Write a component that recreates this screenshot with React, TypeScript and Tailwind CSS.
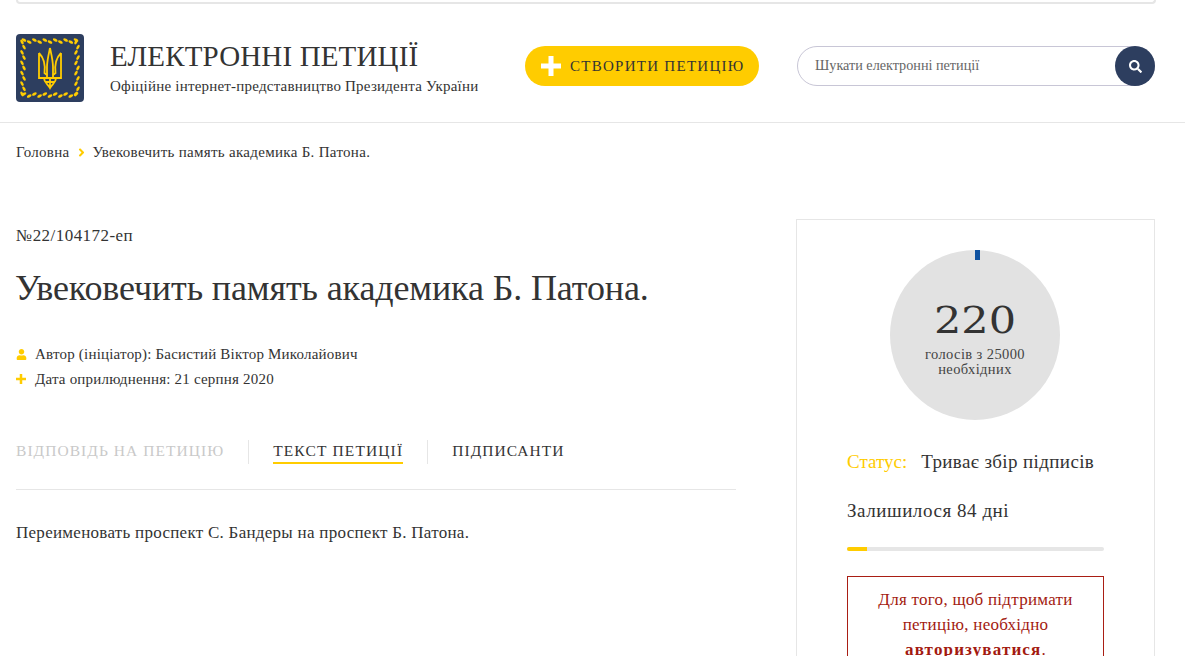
import { FaSearch, FaUser, FaAngleRight } from "react-icons/fa";

// leaves of the wreath, walking clockwise round the square
const leaves: { x: number; y: number; r: number }[] = [];
for (let i = 0; i < 11; i++) {
  const p = 8 + i * 5.2;
  const off = i % 2 === 0 ? -1 : 1;
  leaves.push({ x: p, y: 7 + off, r: 30 });
  leaves.push({ x: 61 + off, y: p, r: 120 });
  leaves.push({ x: p, y: 61 + off, r: -30 });
  leaves.push({ x: 7 + off, y: p, r: 60 });
}

function Logo() {
  return (
    <div className="w-[68px] h-[68px] shrink-0 rounded-[4px] bg-[#2d3e5f]">
      <svg width="68" height="68" viewBox="0 0 68 68" fill="none">
        {leaves.map((l, i) => (
          <ellipse
            key={i}
            cx={l.x}
            cy={l.y}
            rx="2.6"
            ry="1.3"
            fill="#ffcc00"
            transform={`rotate(${l.r} ${l.x} ${l.y})`}
          />
        ))}
        <g stroke="#ffcc00" strokeWidth="1.8">
          <path d="M34 14 C32.5 21 31 27 31 33 L31 44 M34 14 C35.5 21 37 27 37 33 L37 44" />
          <path d="M23 19 V44 H45 V19 M23 19 C28 24 29.5 31 28.5 39 L31 41 M45 19 C40 24 38.5 31 39.5 39 L37 41" />
          <path d="M28 44 C28 49 32 50 34 54 C36 50 40 49 40 44 M34 44 V53 M29.5 48 H38.5" />
        </g>
      </svg>
    </div>
  );
}

function Cross({ size, color }: { size: number; color: string }) {
  return (
    <svg width={size} height={size} viewBox="0 0 20 20" fill={color} className="shrink-0">
      <path d="M7.5 0h5v7.5H20v5h-7.5V20h-5v-7.5H0v-5h7.5z" />
    </svg>
  );
}

function Tab({ label, active, muted, spacing }: { label: string; active?: boolean; muted?: boolean; spacing: string }) {
  return (
    <span
      className={`h-[24px] text-[15.5px] leading-[22px] whitespace-nowrap ${spacing} ${
        muted ? "text-[#c9c9c9]" : "text-[#333]"
      } ${active ? "border-b-2 border-[#ffcc00]" : ""}`}
    >
      {label}
    </span>
  );
}

export default function App() {
  return (
    <div className="h-[656px] overflow-hidden bg-white font-['Liberation_Serif',serif] text-[#333]">
      <div className="mx-4 w-[1140px] h-[4px] border-x-2 border-b-2 border-[#e6e6e6] rounded-b-[6px]" />

      <header className="h-[119px] border-b border-[#e6e6e6] px-4 flex items-start">
        <div className="mt-[30px]">
          <Logo />
        </div>
        <div className="ml-[26px] mt-[34px] w-[415px]">
          <div className="text-[29px] leading-[36px] tracking-[0.15px] whitespace-nowrap">ЕЛЕКТРОННІ ПЕТИЦІЇ</div>
          <div className="text-[15px] leading-[18px] mt-[3px] tracking-[0.21px] whitespace-nowrap">
            Офіційне інтернет-представництво Президента України
          </div>
        </div>
        <button className="mt-[42px] w-[234px] h-[40px] rounded-full bg-[#ffcc00] flex items-center pl-[16px]">
          <Cross size={20} color="#ffffff" />
          <span className="ml-[9px] text-[15px] tracking-[1.27px] whitespace-nowrap">СТВОРИТИ ПЕТИЦІЮ</span>
        </button>
        <div className="ml-[38px] mt-[42px] w-[358px] h-[40px] rounded-full border border-[#c8c6d6] flex items-center justify-between">
          <span className="ml-[17px] text-[14.2px] text-[#666]">Шукати електронні петиції</span>
          <span className="w-[40px] h-[40px] -mr-px rounded-full bg-[#2d3e5f] flex items-center justify-center">
            <FaSearch className="text-white text-[13px]" />
          </span>
        </div>
      </header>

      <nav className="px-4 mt-[20px] flex items-center text-[15px] leading-[18px] tracking-[0.3px]">
        <span>Головна</span>
        <FaAngleRight className="mx-[5px] text-[#ffcc00] text-[13px]" />
        <span>Увековечить память академика Б. Патона.</span>
      </nav>

      <main className="px-4 mt-[58px] flex items-start">
        <section className="w-[720px] shrink-0">
          <div className="mt-[8px] text-[17px] leading-[18px] tracking-[0.45px]">№22/104172-еп</div>
          <h1 className="mt-[21px] -ml-px text-[36px] leading-[44px] tracking-[-0.12px] whitespace-nowrap">
            Увековечить память академика Б. Патона.
          </h1>
          <div className="mt-[35px] flex items-center text-[15px] leading-[18px] tracking-[0.2px]">
            <FaUser className="text-[#ffcc00] text-[11px] w-[11px] mr-[8px]" />
            Автор (ініціатор): Басистий Віктор Миколайович
          </div>
          <div className="mt-[7px] flex items-center text-[15px] leading-[18px] tracking-[0.2px]">
            <span className="mr-[9px]">
              <Cross size={10} color="#ffcc00" />
            </span>
            Дата оприлюднення: 21 серпня 2020
          </div>
          <div className="mt-[52px] pb-[25px] border-b border-[#e6e6e6] flex items-start">
            <Tab label="ВІДПОВІДЬ НА ПЕТИЦІЮ" muted spacing="tracking-[1.05px]" />
            <span className="mx-[24px] w-px h-[24px] bg-[#e6e6e6]" />
            <Tab label="ТЕКСТ ПЕТИЦІЇ" active spacing="tracking-[1.12px]" />
            <span className="mx-[24px] w-px h-[24px] bg-[#e6e6e6]" />
            <Tab label="ПІДПИСАНТИ" spacing="tracking-[1.05px]" />
          </div>
          <p className="mt-[33px] text-[17px] leading-[20px] tracking-[0.275px]">
            Переименовать проспект С. Бандеры на проспект Б. Патона.
          </p>
        </section>

        <aside className="ml-[60px] w-[359px] shrink-0 border border-[#e6e6e6] px-[50px] pt-[30px] pb-[20px]">
          <div className="relative ml-[43px] w-[170px] h-[170px] rounded-full bg-[#e2e2e2] flex flex-col items-center">
            <span className="absolute top-0 left-[85px] w-[5px] h-[10px] bg-[#0f52a0]" />
            <div className="mt-[48px] text-[43px] leading-[44px] font-['DejaVu_Serif',serif] scale-y-[0.85]">220</div>
            <div className="mt-[5px] text-[14.5px] leading-[15px] text-center text-[#444] tracking-[0.4px]">
              голосів з 25000
              <br />
              необхідних
            </div>
          </div>
          <div className="mt-[30px] text-[19px] leading-[24px] whitespace-nowrap">
            <span className="text-[#ffcc00]">Статус:</span>
            <span className="ml-[14px] tracking-[0.38px]">Триває збір підписів</span>
          </div>
          <div className="mt-[25px] text-[19px] leading-[24px] tracking-[0.55px]">Залишилося 84 дні</div>
          <div className="mt-[24px] h-[4px] w-[257px] rounded-full bg-[#e6e6e6]">
            <div className="h-[4px] w-[20px] rounded-l-full bg-[#ffcc00]" />
          </div>
          <div className="mt-[25px] w-[257px] border border-[#a91e14] px-[20px] py-[10px] text-center text-[17px] leading-[25px] tracking-[0.27px] text-[#a31a10]">
            Для того, щоб підтримати петицію, необхідно <b className="tracking-[1.15px]">авторизуватися</b>.
          </div>
        </aside>
      </main>
    </div>
  );
}
